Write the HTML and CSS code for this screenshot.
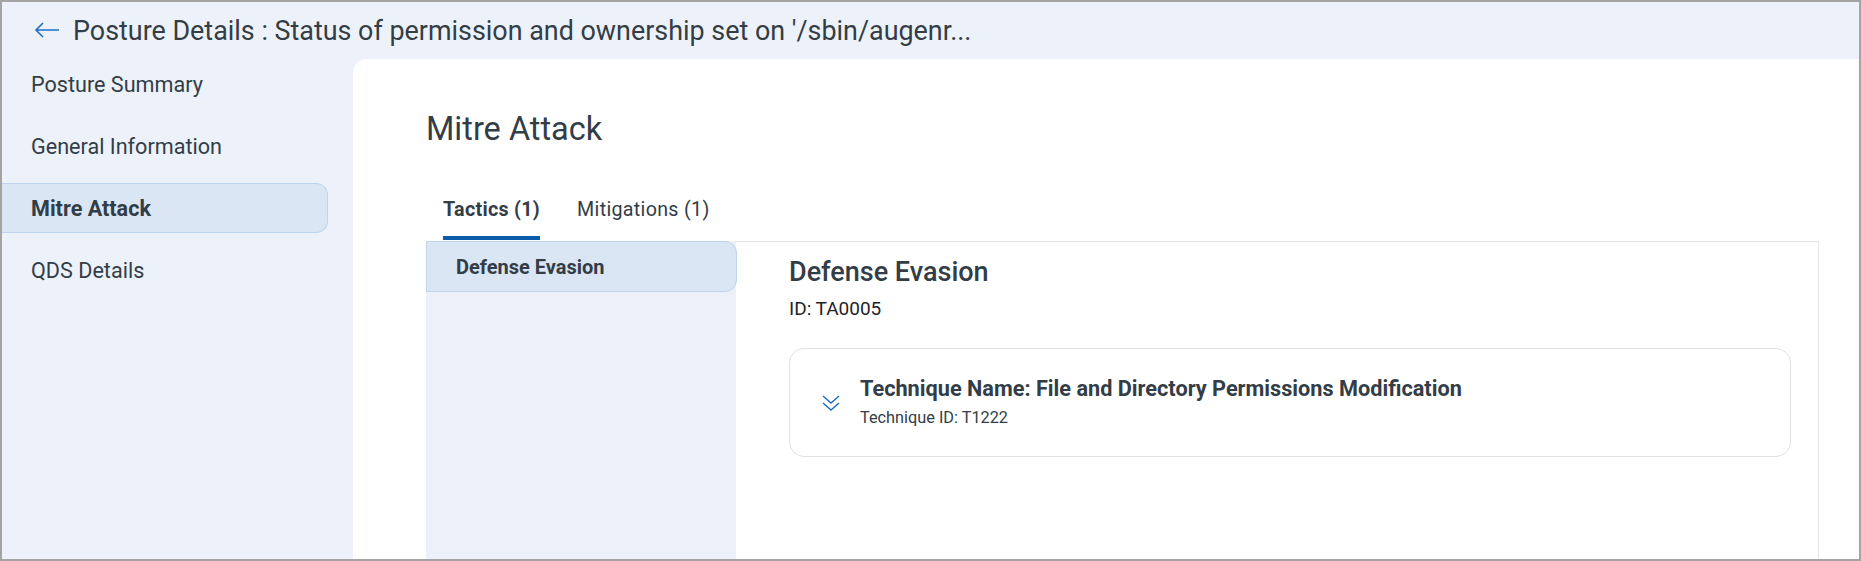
FILE: index.html
```html
<!DOCTYPE html>
<html>
<head>
<meta charset="utf-8">
<link rel="stylesheet" href="styles.css">
</head>
<body>
<div class="frame">
  <header class="header">
    <svg class="back" width="26" height="16" viewBox="0 0 26 16"><path d="M25 8H2M9 1L2 8l7 7" fill="none" stroke="#1f6fc5" stroke-width="1.6"/></svg>
    <h1 class="title">Posture Details : Status of permission and ownership set on '/sbin/augenr...</h1>
  </header>
  <div class="body">
    <nav class="sidebar">
      <div class="nav-item">Posture Summary</div>
      <div class="nav-item">General Information</div>
      <div class="nav-item active">Mitre Attack</div>
      <div class="nav-item">QDS Details</div>
    </nav>
    <main class="panel">
      <h2 class="page-title">Mitre Attack</h2>
      <div class="tabs">
        <div class="tab active">Tactics (1)</div>
        <div class="tab">Mitigations (1)</div>
      </div>
      <div class="tab-box">
        <div class="tactic-list">
          <div class="tactic active">Defense Evasion</div>
        </div>
        <div class="detail">
          <h3 class="detail-title">Defense Evasion</h3>
          <div class="detail-id">ID: TA0005</div>
          <div class="card">
            <svg class="chev" width="20" height="18" viewBox="0 0 20 18"><path d="M2 2l8 7 8-7M2 9l8 7 8-7" fill="none" stroke="#1f6fc5" stroke-width="1.5"/></svg>
            <div class="card-text">
              <div class="card-title">Technique Name: File and Directory Permissions Modification</div>
              <div class="card-sub">Technique ID: T1222</div>
            </div>
          </div>
        </div>
      </div>
    </main>
  </div>
</div>
</body>
</html>
```

FILE: styles.css
```css
* { box-sizing: border-box; }
html, body { margin: 0; padding: 0; }
body { font-family: Roboto, "Liberation Sans", sans-serif; color: #333d47; }
.frame {
  width: 1861px;
  height: 561px;
  border: 2px solid #a4a4a4;
  background: #edf2fa;
  display: flex;
  flex-direction: column;
  overflow: hidden;
}
.header {
  height: 57px;
  flex: none;
  display: flex;
  align-items: center;
  padding-left: 32px;
}
.back { flex: none; margin-top: -2px; }
.title {
  margin: 0 0 0 13px;
  font-size: 26.9px;
  font-weight: 400;
  color: #343d46;
  white-space: nowrap;
}
.body { flex: 1; display: flex; min-height: 0; }
.sidebar {
  width: 351px;
  flex: none;
  padding-top: 0;
  display: flex;
  flex-direction: column;
  gap: 12px;
}
.nav-item {
  width: 326px;
  height: 50px;
  flex: none;
  display: flex;
  align-items: center;
  padding-left: 29px;
  font-size: 21.6px;
  color: #333d47;
  border: 1px solid transparent;
  border-left: none;
  border-radius: 0 12px 12px 0;
}
.nav-item.active {
  background: #dae6f3;
  border-color: #bfd4ea;
  font-weight: 700;
}
.panel {
  flex: 1;
  background: #fff;
  border-top-left-radius: 14px;
  padding: 0 40px 0 73px;
  display: flex;
  flex-direction: column;
  min-width: 0;
}
.page-title {
  margin: 50px 0 0 0;
  font-size: 32.5px;
  font-weight: 400;
  line-height: 40px;
  color: #333d47;
}
.tabs {
  display: flex;
  gap: 37px;
  padding-left: 17px;
  margin-top: 49px;
}
.tab {
  font-size: 19.7px;
  letter-spacing: 0.3px;
  line-height: 24px;
  padding-bottom: 14px;
  border-bottom: 4px solid transparent;
  color: #333d47;
}
.tab.active {
  font-weight: 700;
  border-bottom-color: #0b5cad;
}
.tab-box {
  flex: 1;
  border: 1px solid #e2e6ea;
  border-bottom: none;
  margin-top: 1px;
  display: flex;
  min-height: 0;
}
.tactic-list {
  width: 310px;
  flex: none;
  background: #ecf1f9;
  margin: -1px 0 0 -1px;
}
.tactic {
  height: 51px;
  display: flex;
  align-items: center;
  padding-left: 29px;
  font-size: 20px;
  font-weight: 700;
  width: 311px;
  border-radius: 0 12px 12px 0;
}
.tactic.active {
  background: #dae6f3;
  border: 1px solid #bfd4ea;
}
.detail {
  flex: 1;
  padding: 13px 27px 0 53px;
  min-width: 0;
}
.detail-title {
  margin: 0;
  font-size: 27px;
  font-weight: 500;
  line-height: 34px;
  color: #333d47;
}
.detail-id {
  margin-top: 9px;
  font-size: 19px;
  line-height: 22px;
  color: #1f2328;
}
.card {
  margin-top: 28px;
  height: 109px;
  border: 1px solid #e1e1e1;
  border-radius: 15px;
  display: flex;
  align-items: center;
  padding-left: 31px;
}
.chev { flex: none; margin-top: 1px; }
.card-text { margin-left: 19px; margin-top: -2px; }
.card-title {
  font-size: 21.7px;
  font-weight: 700;
  line-height: 26px;
  color: #333d47;
}
.card-sub {
  margin-top: 7px;
  font-size: 16.3px;
  line-height: 18px;
  color: #333d47;
}
```
